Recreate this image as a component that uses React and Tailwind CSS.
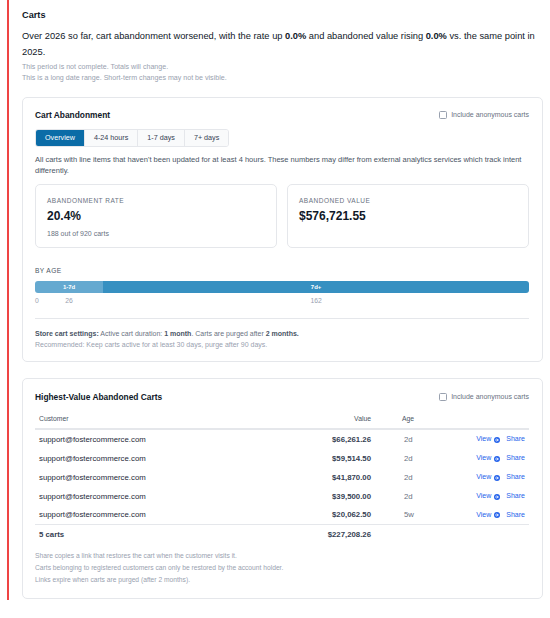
import React from "react";

const rows = [
  { email: "support@fostercommerce.com", value: "$66,261.26", age: "2d" },
  { email: "support@fostercommerce.com", value: "$59,514.50", age: "2d" },
  { email: "support@fostercommerce.com", value: "$41,870.00", age: "2d" },
  { email: "support@fostercommerce.com", value: "$39,500.00", age: "2d" },
  { email: "support@fostercommerce.com", value: "$20,062.50", age: "5w" },
];

// segments of the "by age" bar (width in %)
const ageBuckets = [
  { label: "4-24h", count: 0, width: 0, color: "bg-[#8cc0de]" },
  { label: "1-7d", count: 26, width: 13.8, color: "bg-[#65a9d0]" },
  { label: "7d+", count: 162, width: 86.2, color: "bg-[#3790c1]" },
];

const tabs = ["Overview", "4-24 hours", "1-7 days", "7+ days"];

const Checkbox = ({ label }) => (
  <label className="flex items-center gap-[4px] text-[7px] text-gray-500">
    <span className="w-[8px] h-[8px] border border-gray-400 rounded-[1.5px] bg-white" />
    {label}
  </label>
);

const ViewIcon = () => (
  <svg width="6" height="6" viewBox="0 0 16 16" className="inline-block">
    <circle cx="8" cy="8" r="8" fill="#2563eb" />
    <path d="M4 8h7M8 4.8L11.2 8 8 11.2" stroke="#fff" strokeWidth="2.2" fill="none" strokeLinecap="round" strokeLinejoin="round" />
  </svg>
);

const StatCard = ({ label, value, sub }) => (
  <div className="flex-1 h-[64px] border border-gray-200 rounded-[5px] px-[11px] pt-[11px]">
    <p className="text-[6.5px] leading-[9px] tracking-[0.5px] text-gray-500 font-medium">{label}</p>
    <p className="mt-[4px] text-[12px] leading-[15px] font-bold text-gray-900">{value}</p>
    {sub && <p className="mt-[5px] text-[7px] leading-[9px] text-gray-500">{sub}</p>}
  </div>
);

export default function App() {
  return (
    <div className="min-h-screen bg-white" style={{ fontFamily: '"Liberation Sans", Arial, sans-serif' }}>
      <div className="ml-[7px] border-l-2 border-[#ef4444] pl-[13px] pr-[7px] pt-[8px] pb-[1px]">

        {/* Header */}
        <h1 className="text-[9.2px] leading-[14px] font-bold text-gray-900">Carts</h1>
        <p className="mt-[6px] text-[9.3px] leading-[16px] text-gray-900">
          Over 2026 so far, cart abandonment worsened, with the rate up <b>0.0%</b> and abandoned value rising <b>0.0%</b> vs. the same point in 2025.
        </p>
        <div className="mt-[2px] text-[7.1px] leading-[11px] text-gray-400">
          <p>This period is not complete. Totals will change.</p>
          <p>This is a long date range. Short-term changes may not be visible.</p>
        </div>

        {/* Cart Abandonment */}
        <div className="mt-[13px] border border-gray-200 rounded-[5px] pl-[12px] pr-[13px] pt-[11px] pb-[11px]">
          <div className="flex items-center justify-between">
            <h2 className="text-[8.4px] leading-[12px] font-bold text-gray-900">Cart Abandonment</h2>
            <Checkbox label="Include anonymous carts" />
          </div>

          <div className="mt-[8px] inline-flex h-[18px] border border-gray-200 rounded-[3px] overflow-hidden">
            {tabs.map((t, i) => (
              <div
                key={t}
                className={
                  i === 0
                    ? "px-[9px] flex items-center text-[7.2px] bg-[#0b6ca7] text-white"
                    : "px-[9px] flex items-center text-[7.2px] bg-gray-50 text-gray-700 border-l border-gray-200"
                }
              >
                {t}
              </div>
            ))}
          </div>

          <p className="mt-[7px] text-[7.5px] leading-[11px] text-gray-600">
            All carts with line items that haven't been updated for at least 4 hours. These numbers may differ from external analytics services which track intent differently.
          </p>

          <div className="mt-[8px] flex gap-[10px]">
            <StatCard label="ABANDONMENT RATE" value="20.4%" sub="188 out of 920 carts" />
            <StatCard label="ABANDONED VALUE" value="$576,721.55" />
          </div>

          <p className="mt-[18px] text-[6.6px] leading-[9px] tracking-[0.4px] text-gray-600 font-medium">BY AGE</p>
          <div className="mt-[6px] flex h-[12px] rounded-[3px] overflow-hidden">
            {ageBuckets.map(b => (
              <div
                key={b.label}
                className={`${b.color} flex items-center justify-center text-[6px] font-bold text-white`}
                style={{ width: `${b.width}%` }}
              >
                {b.width > 0 ? b.label : ""}
              </div>
            ))}
          </div>
          <div className="mt-[3px] flex h-[9px]">
            {ageBuckets.map(b => (
              <div key={b.label} className="relative text-[6.8px] leading-[9px] text-gray-400" style={{ width: `${b.width}%` }}>
                <span className={b.width > 0 ? "block text-center" : "absolute left-0 top-0"}>{b.count}</span>
              </div>
            ))}
          </div>

          <div className="mt-[13px] border-t border-gray-200 pt-[9px] text-[7px] leading-[11px]">
            <p className="text-gray-500">
              <b className="text-gray-600">Store cart settings:</b> Active cart duration: <b className="text-gray-600">1 month</b>. Carts are purged after <b className="text-gray-600">2 months.</b>
            </p>
            <p className="text-gray-400">Recommended: Keep carts active for at least 30 days, purge after 90 days.</p>
          </div>
        </div>

        {/* Highest-Value Abandoned Carts */}
        <div className="mt-[16px] border border-gray-200 rounded-[5px] pl-[12px] pr-[13px] pt-[12px] pb-[12px]">
          <div className="flex items-center justify-between">
            <h2 className="text-[8.4px] leading-[12px] font-bold text-gray-900">Highest-Value Abandoned Carts</h2>
            <Checkbox label="Include anonymous carts" />
          </div>

          <div className="mt-[8px]">
            <div className="flex items-center h-[19px] border-b-2 border-gray-200 text-[6.8px] font-medium text-gray-600">
              <div className="w-[256px] pl-[4px]">Customer</div>
              <div className="w-[80px] text-right">Value</div>
              <div className="w-[70px] pl-[31px]">Age</div>
              <div className="flex-1" />
            </div>
            {rows.map((r, i) => (
              <div
                key={i}
                className={`flex items-center h-[19px] text-[7.8px] ${i === rows.length - 1 ? "border-b border-gray-200" : ""}`}
              >
                <div className="w-[256px] pl-[4px] text-gray-800">{r.email}</div>
                <div className="w-[80px] text-right font-bold text-gray-700">{r.value}</div>
                <div className="w-[70px] pl-[33px] text-gray-500">{r.age}</div>
                <div className="flex-1 flex items-center justify-end gap-[6px] pr-[4px] text-[7px] text-[#2563eb]">
                  <span className="flex items-center gap-[3px]">View <ViewIcon /></span>
                  <span>Share</span>
                </div>
              </div>
            ))}
            <div className="flex items-center h-[19px] text-[7.8px] font-bold text-gray-700">
              <div className="w-[256px] pl-[4px]">5 carts</div>
              <div className="w-[80px] text-right">$227,208.26</div>
              <div className="flex-1" />
            </div>
          </div>

          <div className="mt-[6px] text-[6.7px] leading-[12px] text-gray-400">
            <p>Share copies a link that restores the cart when the customer visits it.</p>
            <p>Carts belonging to registered customers can only be restored by the account holder.</p>
            <p>Links expire when carts are purged (after 2 months).</p>
          </div>
        </div>

      </div>
    </div>
  );
}
